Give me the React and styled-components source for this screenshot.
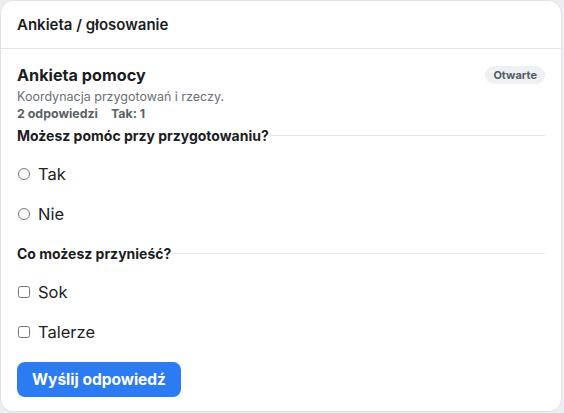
import React from "react";
import styled, { createGlobalStyle } from "styled-components";

const GlobalStyle = createGlobalStyle`
  html, body {
    margin: 0;
    padding: 0;
    background: #eceef1;
    font-family: Inter, "Noto Sans", "Liberation Sans", sans-serif;
    color: #1c1d1f;
  }
`;

const Card = styled.section`
  box-sizing: border-box;
  width: 562px;
  height: 412px;
  background: #fff;
  border: 1px solid #dfe2e6;
  border-radius: 13px;
  overflow: hidden;
`;

const CardHeader = styled.header`
  height: 47px;
  display: flex;
  align-items: center;
  padding: 0 16px;
  border-bottom: 1px solid #e1e4e8;
  font-size: 15px;
  font-weight: 600;
`;

const Body = styled.div`
  padding: 15px 16px 0;
  display: flex;
  flex-direction: column;
`;

const TitleRow = styled.div`
  display: flex;
  justify-content: space-between;
  align-items: flex-start;
`;

const Title = styled.h2`
  margin: 0;
  font-size: 16.2px;
  line-height: 22px;
  font-weight: 700;
`;

const Badge = styled.span`
  margin-top: 2px;
  height: 18px;
  padding: 0 8px;
  display: inline-flex;
  align-items: center;
  border-radius: 9px;
  background: #eef0f3;
  color: #585d64;
  font-size: 11px;
  font-weight: 700;
`;

const Subtitle = styled.p`
  margin: 2px 0 0;
  font-size: 12.5px;
  line-height: 18px;
  color: #6b6f76;
`;

const Stats = styled.div`
  display: flex;
  gap: 13px;
  font-size: 12.4px;
  line-height: 16px;
  font-weight: 700;
  color: #5b5f66;
`;

const Form = styled.form`
  margin-top: 4px;
  display: flex;
  flex-direction: column;
  gap: 20px;
`;

const Question = styled.div`
  display: flex;
  align-items: center;
  height: 18px;
  font-size: 14px;
  font-weight: 700;

  &::after {
    content: "";
    flex: 1;
    height: 1px;
    background: #e3e5e9;
  }
`;

const Option = styled.label`
  display: flex;
  align-items: center;
  height: 20px;
  font-size: 16.5px;
  color: #222;

  input {
    margin: 0 8px 0 1px;
    width: 12px;
    height: 12px;
  }
`;

const Submit = styled.button`
  align-self: flex-start;
  width: 164px;
  height: 35px;
  border: none;
  border-radius: 8px;
  background: #2c7bf2;
  color: #fff;
  font-family: inherit;
  font-size: 15.5px;
  font-weight: 700;
`;

const questions = [
  { title: "Możesz pomóc przy przygotowaniu?", type: "radio", options: ["Tak", "Nie"] },
  { title: "Co możesz przynieść?", type: "checkbox", options: ["Sok", "Talerze"] },
];

export default function App() {
  return (
    <>
      <GlobalStyle />
      <Card>
        <CardHeader>Ankieta / głosowanie</CardHeader>
        <Body>
          <TitleRow>
            <Title>Ankieta pomocy</Title>
            <Badge>Otwarte</Badge>
          </TitleRow>
          <Subtitle>Koordynacja przygotowań i rzeczy.</Subtitle>
          <Stats>
            <span>2 odpowiedzi</span>
            <span>Tak: 1</span>
          </Stats>
          <Form onSubmit={(e) => e.preventDefault()}>
            {questions.map((q, qi) => (
              <React.Fragment key={qi}>
                <Question>{q.title}</Question>
                {q.options.map((o) => (
                  <Option key={o}>
                    <input type={q.type} name={`q${qi}`} />
                    {o}
                  </Option>
                ))}
              </React.Fragment>
            ))}
            <Submit type="submit">Wyślij odpowiedź</Submit>
          </Form>
        </Body>
      </Card>
    </>
  );
}
